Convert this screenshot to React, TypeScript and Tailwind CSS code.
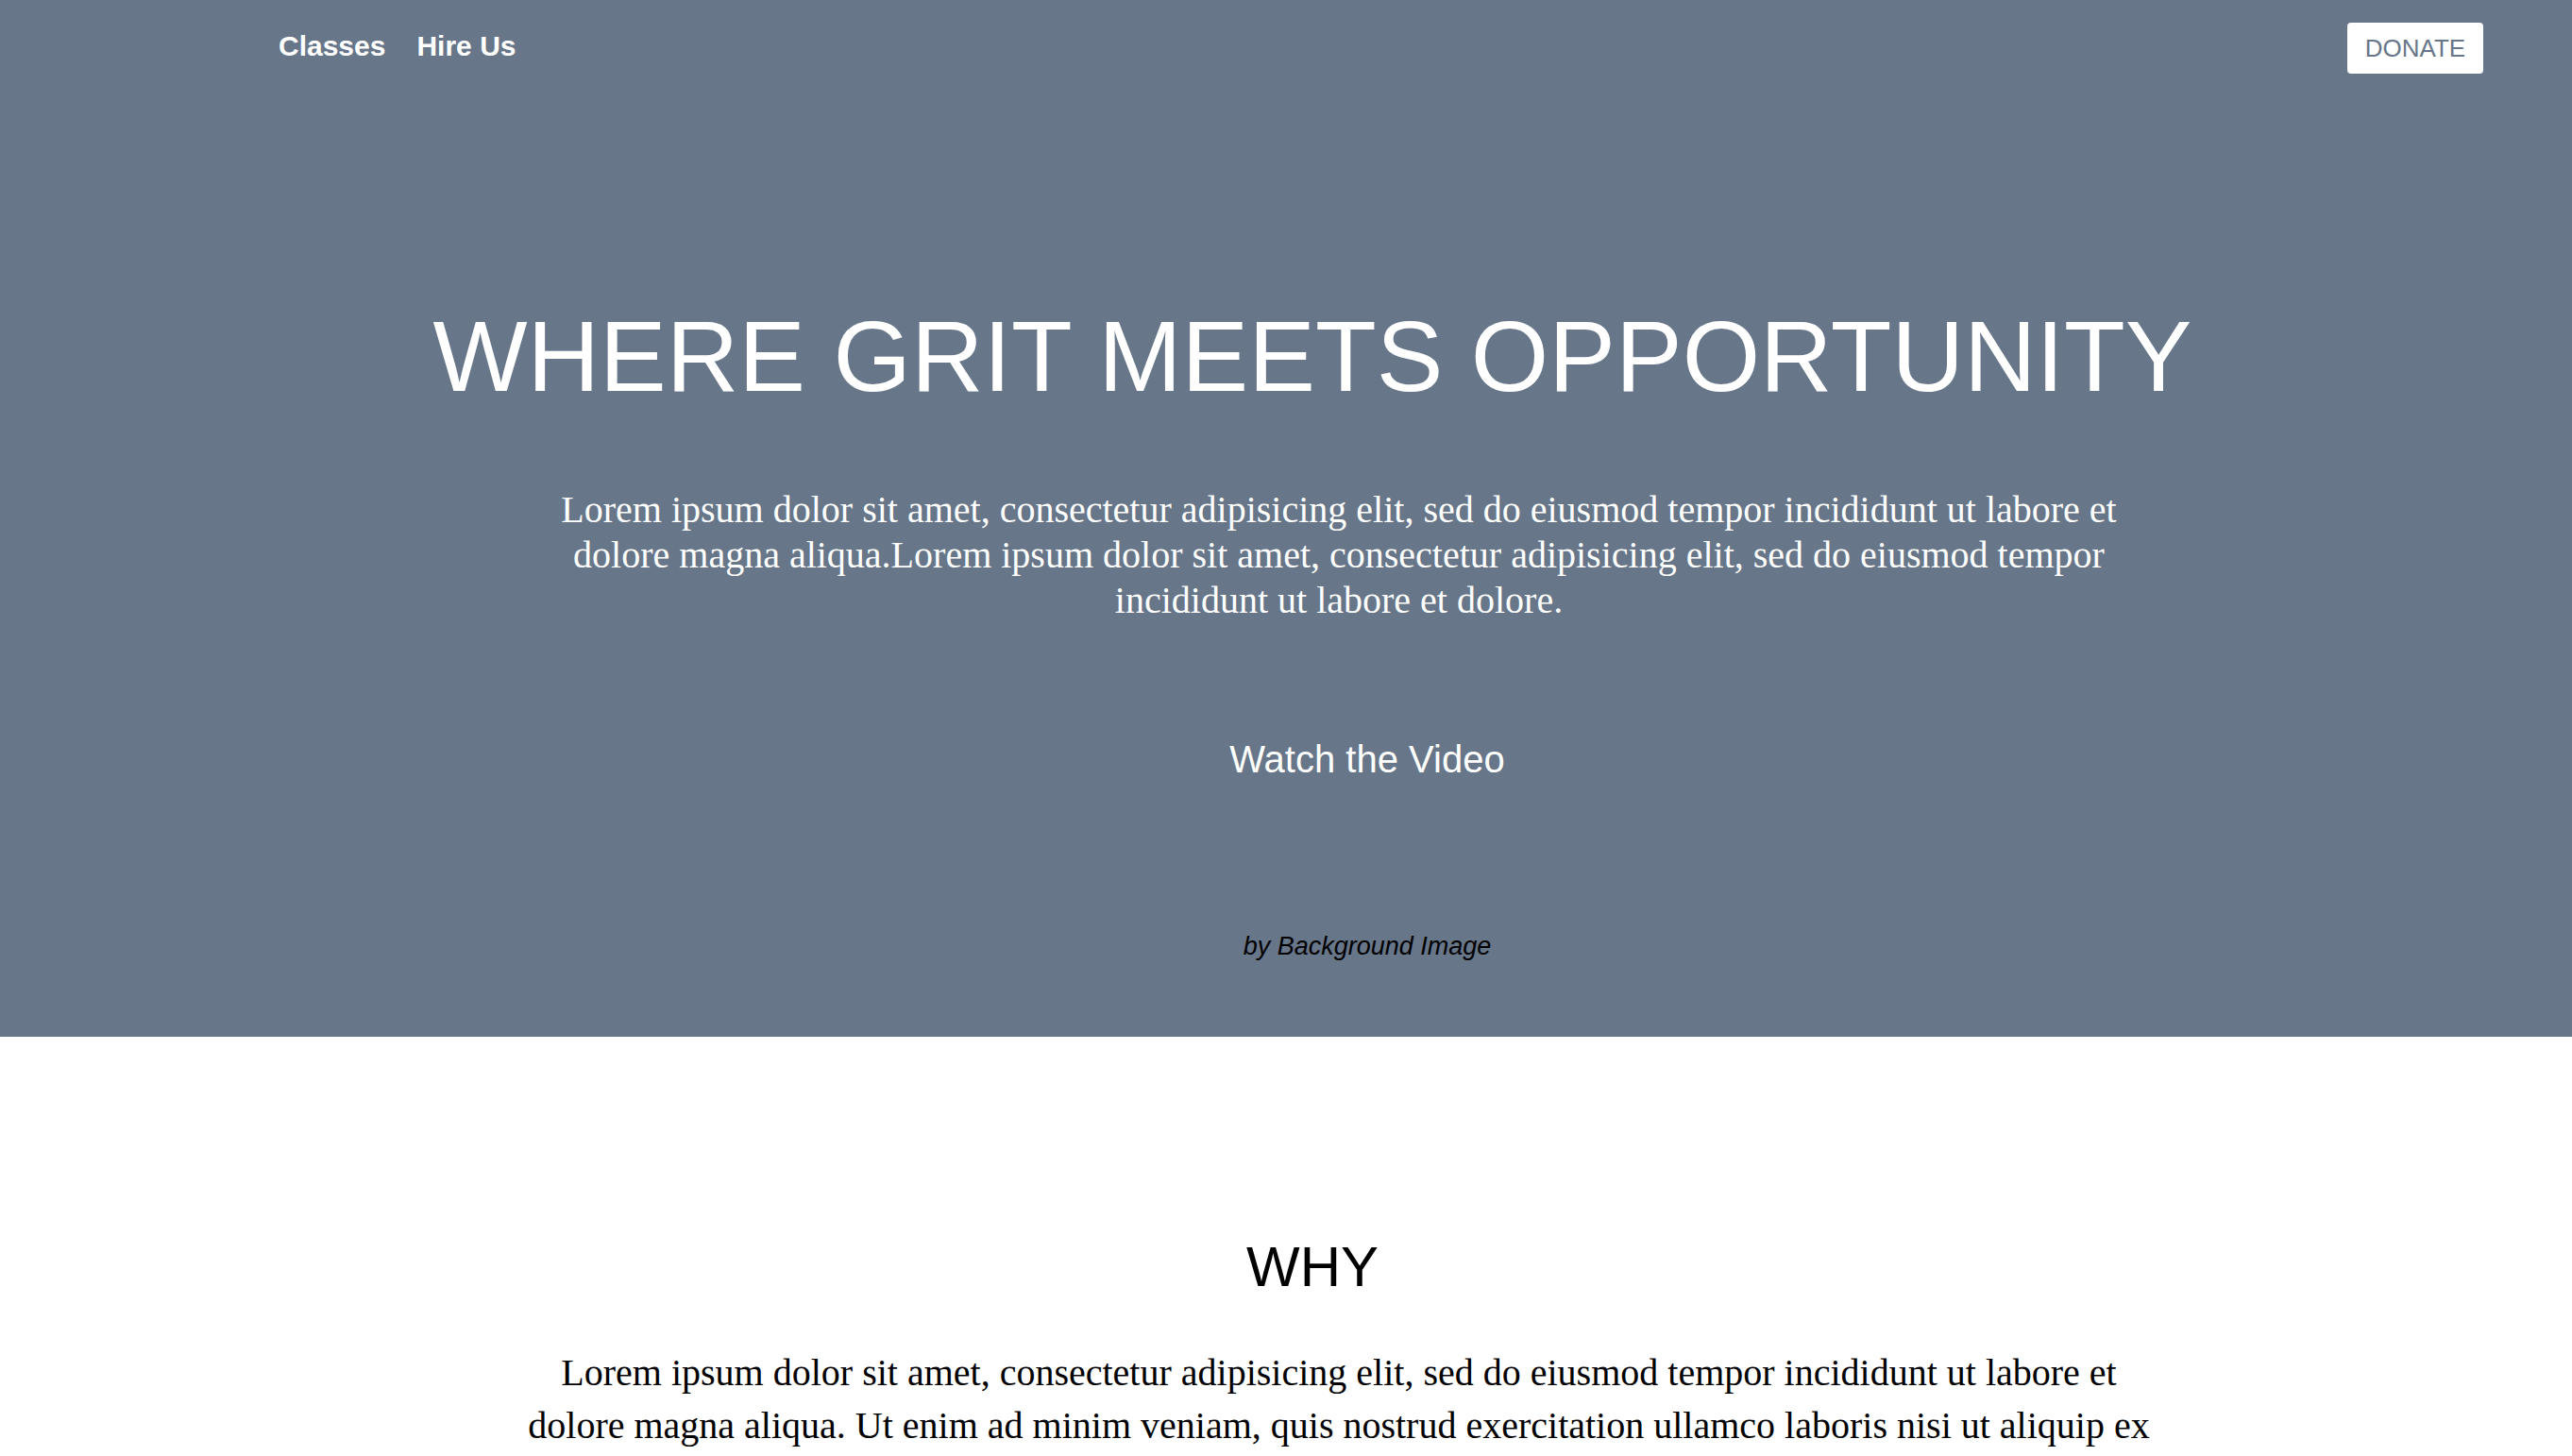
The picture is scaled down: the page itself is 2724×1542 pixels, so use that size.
export default function App() {
  return (
    <div className="min-h-screen bg-white font-['Liberation_Sans',Arial,sans-serif]">
      {/* Hero */}
      <section className="bg-[#677689] h-[1098px] flex flex-col">
        <header className="flex items-center justify-between pt-[24px] pl-[295px] pr-[94px]">
          <nav className="flex items-center gap-[33px] mb-[4px] text-[30px] font-bold text-white leading-none">
            <a href="#">Classes</a>
            <a href="#">Hire Us</a>
          </nav>
          <button className="w-[144px] h-[54px] bg-white rounded-[4px] text-[26px] text-[#677689] leading-none">
            DONATE
          </button>
        </header>

        <div className="pl-[56px] mt-[246px]">
          <h1 className="text-center text-white text-[106px] leading-none font-normal whitespace-nowrap">
            WHERE GRIT MEETS OPPORTUNITY
          </h1>
        </div>

        <div className="pl-[112px] mt-[86px]">
          <p className="max-w-[1730px] mx-auto text-center text-white text-[40px] leading-[48px] font-['Liberation_Serif','Times_New_Roman',serif]">
            Lorem ipsum dolor sit amet, consectetur adipisicing elit, sed do eiusmod tempor incididunt ut labore et
            dolore magna aliqua.Lorem ipsum dolor sit amet, consectetur adipisicing elit, sed do eiusmod tempor
            incididunt ut labore et dolore.
          </p>
        </div>

        <div className="pl-[172px] mt-[124px] flex flex-col items-center">
          <a href="#" className="text-white text-[40px] leading-none">
            Watch the Video
          </a>
          <p className="mt-[165px] text-black italic text-[27px] leading-none">by Background Image</p>
        </div>
      </section>

      {/* Why */}
      <section className="pt-[214px] pb-[120px]">
        <div className="pl-[56px]">
          <h2 className="text-center text-black text-[60px] leading-none font-normal">WHY</h2>
        </div>
        <div className="pl-[112px] mt-[54px]">
          <p className="max-w-[1730px] mx-auto text-center text-black text-[40px] leading-[56px] font-['Liberation_Serif','Times_New_Roman',serif]">
            Lorem ipsum dolor sit amet, consectetur adipisicing elit, sed do eiusmod tempor incididunt ut labore et
            dolore magna aliqua. Ut enim ad minim veniam, quis nostrud exercitation ullamco laboris nisi ut aliquip ex
            ea commodo consequat. Duis aute irure dolor in reprehenderit in voluptate velit esse cillum dolore eu
            fugiat nulla pariatur.
          </p>
        </div>
      </section>
    </div>
  );
}
